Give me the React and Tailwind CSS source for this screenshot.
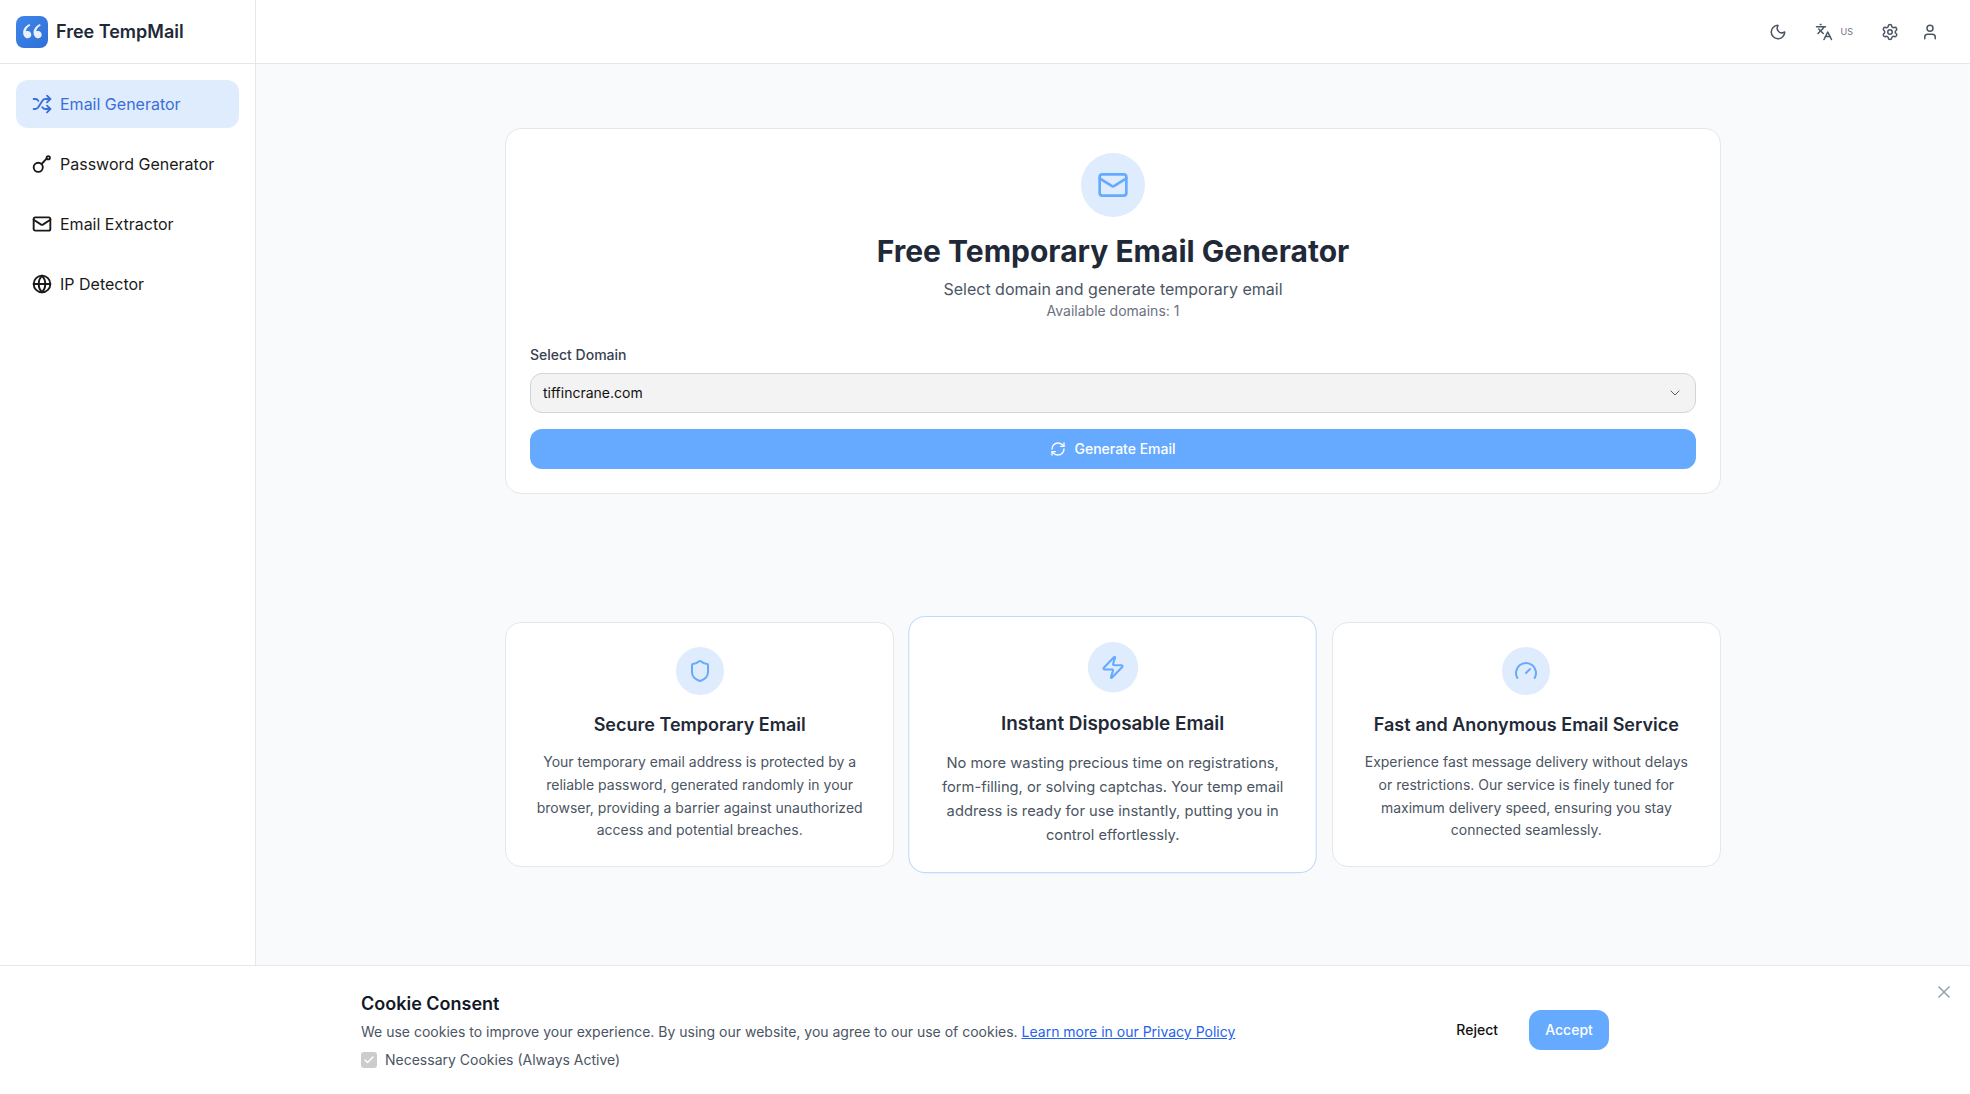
import React from "react";
import { Shuffle, Mail, Globe, Moon, Languages, Settings, User, ChevronDown, RefreshCw, Shield, Zap, Gauge, X, Check } from "lucide-react";
import { RiDoubleQuotesL } from "react-icons/ri";

function KeyIcon({ className, strokeWidth = 2 }) {
  return (
    <svg viewBox="0 0 24 24" fill="none" stroke="currentColor" strokeWidth={strokeWidth} strokeLinecap="round" strokeLinejoin="round" className={className}>
      <circle cx="7.5" cy="16" r="5.5" />
      <path d="m11.5 12 6-6.5" />
      <circle cx="19.5" cy="4.5" r="2" />
    </svg>
  );
}

const nav = [
  { label: "Email Generator", Icon: Shuffle, active: true },
  { label: "Password Generator", Icon: KeyIcon },
  { label: "Email Extractor", Icon: Mail },
  { label: "IP Detector", Icon: Globe },
];

const features = [
  {
    title: "Secure Temporary Email",
    text: "Your temporary email address is protected by a reliable password, generated randomly in your browser, providing a barrier against unauthorized access and potential breaches.",
    Icon: Shield,
  },
  {
    title: "Instant Disposable Email",
    text: "No more wasting precious time on registrations, form-filling, or solving captchas. Your temp email address is ready for use instantly, putting you in control effortlessly.",
    Icon: Zap,
    featured: true,
  },
  {
    title: "Fast and Anonymous Email Service",
    text: "Experience fast message delivery without delays or restrictions. Our service is finely tuned for maximum delivery speed, ensuring you stay connected seamlessly.",
    Icon: Gauge,
  },
];

export default function App() {
  return (
    <div className="relative h-[1094px] overflow-hidden bg-[#f9fafb] font-['Inter',sans-serif]">
      <header className="flex h-16 items-center border-b border-[#e5e7eb] bg-white">
        <div className="flex h-full w-64 items-center gap-2 border-r border-[#e5e7eb] pl-4">
          <div className="flex h-8 w-8 items-center justify-center rounded-lg bg-gradient-to-br from-[#3f86ea] to-[#2f6fd6]">
            <RiDoubleQuotesL className="h-[25px] w-[25px] text-[#e8f0fd]" />
          </div>
          <span className="text-lg font-semibold text-[#1f2937]">Free TempMail</span>
        </div>
        <div className="ml-auto flex items-center pr-[31px] text-[#4b5563]">
          <Moon className="h-[18px] w-[18px]" />
          <div className="ml-[28px] flex items-center gap-2">
            <Languages className="h-[18px] w-[18px]" />
            <span className="text-[9px] leading-none text-[#6b7280]">US</span>
          </div>
          <Settings className="ml-[28px] h-[18px] w-[18px]" />
          <User className="ml-[22px] h-[18px] w-[18px]" />
        </div>
      </header>

      <div className="flex">
        <aside className="flex h-[1030px] w-64 shrink-0 flex-col gap-3 border-r border-[#e5e7eb] bg-white px-4 pt-4">
          {nav.map(({ label, Icon, active }) => (
            <div
              key={label}
              className={
                active
                  ? "flex h-12 w-[223px] items-center gap-2 rounded-xl bg-[#dfecfd] px-4 text-[#3b6fd8]"
                  : "flex h-12 w-[223px] items-center gap-2 rounded-xl px-4 text-[#1a1a1a]"
              }
            >
              <Icon className="h-5 w-5 shrink-0" strokeWidth={2.25} />
              <span className="text-base">{label}</span>
            </div>
          ))}
        </aside>

        <main className="flex-1 px-8 pt-16">
          <div className="mx-auto w-[1216px]">
            <section className="flex flex-col rounded-2xl border border-[#e5e7eb] bg-white p-6">
              <div className="flex flex-col items-center text-center">
                <div className="mb-4 flex h-16 w-16 items-center justify-center rounded-full bg-[#dfecfd]">
                  <Mail className="h-8 w-8 text-[#66aaff]" />
                </div>
                <h1 className="mb-2 text-3xl font-bold text-[#1f2937]">Free Temporary Email Generator</h1>
                <p className="text-base text-[#4b5563]">Select domain and generate temporary email</p>
                <p className="text-sm text-[#6b7280]">Available domains: 1</p>
              </div>
              <label className="mt-6 mb-2 text-sm font-medium text-[#374151]">Select Domain</label>
              <div className="flex h-10 items-center justify-between rounded-xl border border-[#d1d5db] bg-[#f3f3f3] pr-3 pl-3 text-sm text-[#111]">
                <span>tiffincrane.com</span>
                <ChevronDown className="h-4 w-4 text-[#374151]" strokeWidth={1.25} />
              </div>
              <button className="mt-4 flex h-10 items-center justify-center gap-2 rounded-xl bg-[#66aaff] text-sm font-medium text-white">
                <RefreshCw className="h-4 w-4" />
                Generate Email
              </button>
            </section>

            <section className="mt-32 grid grid-cols-3 gap-6">
              {features.map(({ title, text, Icon, featured }) => (
                <div
                  key={title}
                  className={
                    featured
                      ? "flex scale-105 flex-col items-center rounded-2xl border border-[#bfdbfe] bg-white p-6 text-center"
                      : "flex flex-col items-center rounded-2xl border border-[#e5e7eb] bg-white p-6 text-center"
                  }
                >
                  <div className="mb-4 flex h-12 w-12 items-center justify-center rounded-full bg-[#dfecfd]">
                    <Icon className="h-6 w-6 text-[#66aaff]" />
                  </div>
                  <h3 className="mb-3 text-lg font-semibold text-[#1f2937]">{title}</h3>
                  <p className="text-sm leading-relaxed text-[#4b5563]">{text}</p>
                </div>
              ))}
            </section>
          </div>
        </main>
      </div>

      <div className="absolute right-0 bottom-0 left-0 border-t border-[#e5e7eb] bg-white py-6">
        <button className="absolute top-4 right-4 text-[#9ca3af]">
          <X className="h-5 w-5" />
        </button>
        <div className="mx-auto flex max-w-7xl items-center justify-between px-4">
          <div>
            <h3 className="mb-1 text-lg font-semibold text-[#111827]">Cookie Consent</h3>
            <p className="text-sm text-[#4b5563]">
              We use cookies to improve your experience. By using our website, you agree to our use of cookies.{" "}
              <span className="text-[#2563eb] underline">Learn more in our Privacy Policy</span>
            </p>
            <div className="mt-2 flex items-center gap-2 text-sm text-[#4b5563]">
              <span className="flex h-4 w-4 items-center justify-center rounded-[3px] bg-[#cccccc]">
                <Check className="h-3 w-3 text-white" strokeWidth={3} />
              </span>
              Necessary Cookies (Always Active)
            </div>
          </div>
          <div className="flex items-center gap-[15px]">
            <button className="h-10 px-4 text-sm font-medium text-[#111]">Reject</button>
            <button className="h-10 w-20 rounded-xl bg-[#66aaff] text-sm font-medium text-white">Accept</button>
          </div>
        </div>
      </div>
    </div>
  );
}
